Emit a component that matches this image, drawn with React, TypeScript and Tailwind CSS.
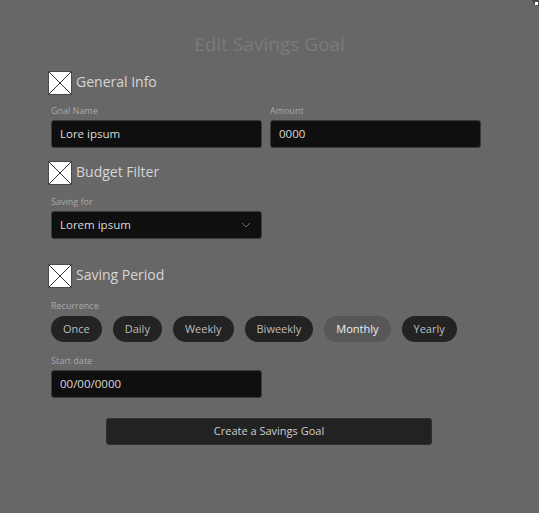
import React from 'react'

const font = { fontFamily: '"Open Sans", "Noto Sans", sans-serif' }

function PlaceholderIcon() {
    return (
        <svg width="24" height="24" viewBox="0 0 24 24" className="shrink-0">
            <rect x="0.5" y="0.5" width="23" height="23" fill="#ffffff" stroke="#4a4a4a" />
            <line x1="1" y1="1" x2="23" y2="23" stroke="#333" strokeWidth="1" />
            <line x1="23" y1="1" x2="1" y2="23" stroke="#333" strokeWidth="1" />
        </svg>
    )
}

function SectionHeading({ title, className = '' }: { title: string; className?: string }) {
    return (
        <div className={`flex items-center gap-[4px] h-[24px] ${className}`}>
            <PlaceholderIcon />
            <span className="text-[14px] leading-[20px] -mt-[3px] text-[#d6d6d6]">{title}</span>
        </div>
    )
}

function Field({ label, value, className = '', chevron = false }: { label: string; value: string; className?: string; chevron?: boolean }) {
    return (
        <div className={`flex flex-col w-[211px] ${className}`}>
            <span className="text-[9px] leading-[12px] text-[#a9a9a9]">{label}</span>
            <div className="mt-[3px] h-[28px] rounded-[3px] bg-[#0f0f0f] border border-[#3a3a3a] flex items-center justify-between px-[8px]">
                <span className="text-[11.5px] text-[#dcdcdc]">{value}</span>
                {chevron && (
                    <svg width="10" height="6" viewBox="0 0 10 6" className="mr-[2px]">
                        <path d="M1 1 L5 5 L9 1" fill="none" stroke="#6f6f6f" strokeWidth="1" />
                    </svg>
                )}
            </div>
        </div>
    )
}

const periods = ['Once', 'Daily', 'Weekly', 'Biweekly', 'Monthly', 'Yearly']

export default function App() {
    return (
        <div style={font} className="relative w-[539px] h-[513px] bg-[#676767] overflow-hidden">
            <div className="absolute -right-[14px] -top-[15px] w-[22px] h-[22px] rounded-full bg-[#4a4a4a] flex items-end justify-start pl-[4px] pb-[2px]">
                <span className="block w-[3px] h-[3px] bg-white" />
            </div>

            <h1 className="pt-[32px] text-center text-[19px] leading-[24px] font-normal text-[#7b7b7b]">Edit Savings Goal</h1>

            <div className="pl-[51px] w-[481px] flex flex-col">
                <SectionHeading title="General Info" className="mt-[15px] -ml-[3px]" />
                <div className="mt-[10px] flex gap-[8px]">
                    <Field label="Goal Name" value="Lore ipsum" />
                    <Field label="Amount" value="0000" />
                </div>

                <SectionHeading title="Budget Filter" className="mt-[13px] -ml-[3px]" />
                <Field label="Saving for" value="Lorem ipsum" className="mt-[11px]" chevron />

                <SectionHeading title="Saving Period" className="mt-[25px] -ml-[3px]" />
                <span className="mt-[12px] text-[9px] leading-[12px] text-[#a9a9a9]">Recurrence</span>
                <div className="mt-[4px] flex gap-[11px]">
                    {periods.map((p) => (
                        <div
                            key={p}
                            className={`h-[26px] px-[12px] rounded-full flex items-center text-[11px] ${p === 'Monthly' ? 'bg-[#575757] text-[#efefef]' : 'bg-[#232323] text-[#bdbdbd]'}`}
                        >
                            {p}
                        </div>
                    ))}
                </div>

                <Field label="Start date" value="00/00/0000" className="mt-[13px]" />

                <div className="mt-[20px] ml-[55px] w-[326px] h-[27px] rounded-[3px] bg-[#222222] border border-[#2e2e2e] flex items-center justify-center text-[11px] text-[#cfcfcf]">
                    Create a Savings Goal
                </div>
            </div>
        </div>
    )
}
